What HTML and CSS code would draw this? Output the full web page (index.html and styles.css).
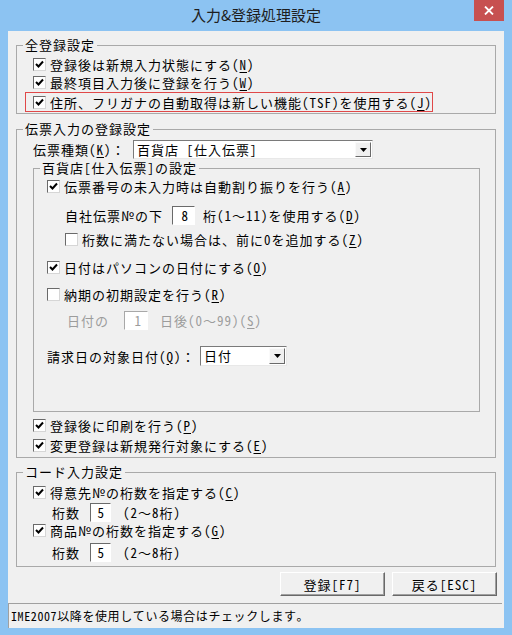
FILE: index.html
```html
<!DOCTYPE html>
<html lang="ja">
<head>
  <meta charset="UTF-8" />
  <title>入力&amp;登録処理設定</title>
  <link rel="stylesheet" href="styles.css">
</head>
<body>

  <div class="window">
    <!-- Title bar -->
    <div class="titlebar">
      <span></span>
      <span class="title">入力&amp;登録処理設定</span>
      <span class="close-area">
        <span class="close">
          <svg width="10" height="9" viewBox="0 0 10 9"><path d="M1 0.5 L9 8.5 M9 0.5 L1 8.5" stroke="#fff" stroke-width="1.8" fill="none"/></svg>
        </span>
      </span>
    </div>

    <div class="client">

      <!-- 全登録設定 -->
      <fieldset class="group group-all">
        <legend>全登録設定</legend>
        <div class="all-body">
          <div class="row row-all">
            <span class="cb"><svg viewBox="0 0 11 11"><path d="M2 5 L4.5 7.5 L9 2.5" stroke="#000" stroke-width="2" fill="none"/></svg></span>
            登録後は新規入力状態にする(<u>N</u>)
          </div>
          <div class="row row-all">
            <span class="cb"><svg viewBox="0 0 11 11"><path d="M2 5 L4.5 7.5 L9 2.5" stroke="#000" stroke-width="2" fill="none"/></svg></span>
            最終項目入力後に登録を行う(<u>W</u>)
          </div>
          <div class="row highlight">
            <span class="cb"><svg viewBox="0 0 11 11"><path d="M2 5 L4.5 7.5 L9 2.5" stroke="#000" stroke-width="2" fill="none"/></svg></span>
            住所、フリガナの自動取得は新しい機能(TSF)を使用する(<u>J</u>)
          </div>
        </div>
      </fieldset>

      <!-- 伝票入力の登録設定 -->
      <fieldset class="group group-slip">
        <legend>伝票入力の登録設定</legend>
        <div class="slip-body">
          <div class="row row-kind">
            <span class="kind-label">伝票種類(<u>K</u>)：</span>
            <div class="combo combo-kind">
              <span class="combo-text">百貨店 [仕入伝票]</span>
              <span class="combo-btn"><svg width="7" height="4" viewBox="0 0 7 4"><path d="M0 0 H7 L3.5 4 Z" fill="#000"/></svg></span>
            </div>
          </div>

          <fieldset class="group group-store">
            <legend>百貨店[仕入伝票]の設定</legend>
            <div class="store-body">
              <div class="row r-auto">
                <span class="cb"><svg viewBox="0 0 11 11"><path d="M2 5 L4.5 7.5 L9 2.5" stroke="#000" stroke-width="2" fill="none"/></svg></span>
                伝票番号の未入力時は自動割り振りを行う(<u>A</u>)
              </div>
              <div class="row row-field r-digits">
                <span>自社伝票№の下</span>
                <span class="num num-digits">8</span>
                <span>桁(1～11)を使用する(<u>D</u>)</span>
              </div>
              <div class="row r-zero">
                <span class="cb"></span>
                桁数に満たない場合は、前に0を追加する(<u>Z</u>)
              </div>
              <div class="row r-pc">
                <span class="cb"><svg viewBox="0 0 11 11"><path d="M2 5 L4.5 7.5 L9 2.5" stroke="#000" stroke-width="2" fill="none"/></svg></span>
                日付はパソコンの日付にする(<u>O</u>)
              </div>
              <div class="row r-due">
                <span class="cb"></span>
                納期の初期設定を行う(<u>R</u>)
              </div>
              <div class="row row-field r-days disabled">
                <span>日付の</span>
                <span class="num num-days">1</span>
                <span>日後(0～99)(<u>S</u>)</span>
              </div>
              <div class="row row-field r-bill">
                <span class="bill-label">請求日の対象日付(<u>Q</u>)：</span>
                <div class="combo combo-bill">
                  <span class="combo-text">日付</span>
                  <span class="combo-btn"><svg width="7" height="4" viewBox="0 0 7 4"><path d="M0 0 H7 L3.5 4 Z" fill="#000"/></svg></span>
                </div>
              </div>
            </div>
          </fieldset>

          <div class="row r-print">
            <span class="cb"><svg viewBox="0 0 11 11"><path d="M2 5 L4.5 7.5 L9 2.5" stroke="#000" stroke-width="2" fill="none"/></svg></span>
            登録後に印刷を行う(<u>P</u>)
          </div>
          <div class="row r-change">
            <span class="cb"><svg viewBox="0 0 11 11"><path d="M2 5 L4.5 7.5 L9 2.5" stroke="#000" stroke-width="2" fill="none"/></svg></span>
            変更登録は新規発行対象にする(<u>E</u>)
          </div>
        </div>
      </fieldset>

      <!-- コード入力設定 -->
      <fieldset class="group group-code">
        <legend>コード入力設定</legend>
        <div class="code-body">
          <div class="row r-cust">
            <span class="cb"><svg viewBox="0 0 11 11"><path d="M2 5 L4.5 7.5 L9 2.5" stroke="#000" stroke-width="2" fill="none"/></svg></span>
            得意先№の桁数を指定する(<u>C</u>)
          </div>
          <div class="row row-field r-len">
            <span>桁数</span>
            <span class="num num-len">5</span>
            <span>(2～8桁)</span>
          </div>
          <div class="row r-item">
            <span class="cb"><svg viewBox="0 0 11 11"><path d="M2 5 L4.5 7.5 L9 2.5" stroke="#000" stroke-width="2" fill="none"/></svg></span>
            商品№の桁数を指定する(<u>G</u>)
          </div>
          <div class="row row-field r-len r-len2">
            <span>桁数</span>
            <span class="num num-len">5</span>
            <span>(2～8桁)</span>
          </div>
        </div>
      </fieldset>

      <div class="buttons">
        <button class="btn">登録[F7]</button>
        <button class="btn">戻る[ESC]</button>
      </div>

      <div class="status">IME2007以降を使用している場合はチェックします。</div>
    </div>
  </div>

</body>
</html>
```

FILE: styles.css
```css
body {
  margin: 0;
  background-color: #8cc3f2;
  color: #000;
  font-family: "Noto Sans Mono CJK JP", "Noto Sans CJK JP", monospace;
  font-size: 13px;
  letter-spacing: 1px;
}

u {
  text-decoration-thickness: 1px;
  text-underline-offset: 2px;
}

.window {
  width: 512px;
  height: 635px;
  display: flex;
  flex-direction: column;
}

/* title bar */
.titlebar {
  height: 31px;
  display: grid;
  grid-template-columns: 1fr auto 1fr;
}

.title {
  font-family: "Noto Sans CJK JP", sans-serif;
  font-size: 15px;
  letter-spacing: 0;
  line-height: 30px;
  color: #1e1e1e;
}

.close-area {
  display: flex;
  justify-content: flex-end;
  padding-right: 8px;
}

.close {
  width: 30px;
  height: 21px;
  background: #c75050;
  display: flex;
  align-items: center;
  justify-content: center;
}

/* client area */
.client {
  margin: 0 8px;
  height: 597px;
  background: #f0f0f0;
  display: flex;
  flex-direction: column;
}

.group {
  margin: 0 8px;
  padding: 0;
  border: 1px solid #a9a9a9;
  min-width: 0;
}

.group legend {
  margin-left: 6px;
  padding: 0 2px;
  line-height: 14px;
}

.row {
  display: flex;
  align-items: center;
  height: 16px;
  white-space: nowrap;
}

.cb {
  width: 11px;
  height: 11px;
  flex: none;
  border: 1px solid;
  border-color: #6a6a6a #d6d6d6 #d6d6d6 #6a6a6a;
  background: #fff;
  margin-right: 4px;
  display: flex;
}

.cb svg {
  width: 11px;
  height: 11px;
}

/* 全登録設定 */
.group-all {
  margin-top: 7px;
}

.all-body {
  padding: 3px 0 1px 8px;
}

.row-all {
  height: 18px;
  padding-left: 8px;
}

.highlight {
  width: 408px;
  height: 20px;
  box-sizing: border-box;
  margin-top: 1px;
  padding-left: 7px;
  border: 1px solid #e04848;
}

/* 伝票入力の登録設定 */
.group-slip {
  margin-top: 8px;
}

.slip-body {
  padding: 4px 15px 4px 16px;
}

.row-kind {
  height: 19px;
}

.kind-label {
  width: 100px;
}

.combo {
  display: flex;
  box-sizing: border-box;
  background: #fff;
  border: 1px solid;
  border-color: #7a7a7a #e8e8e8 #e8e8e8 #7a7a7a;
}

.combo-text {
  flex: 1;
  padding-left: 3px;
  line-height: 17px;
}

.combo-btn {
  width: 14px;
  margin: 1px;
  border: 1px solid;
  border-color: #fafafa #6a6a6a #6a6a6a #fafafa;
  background: #f0f0f0;
  display: flex;
  align-items: center;
  justify-content: center;
}

.combo-kind {
  width: 240px;
  height: 19px;
}

.group-store {
  margin: 2px 0 0;
}

.store-body {
  padding: 3px 0 45px 13px;
}

.row-field {
  height: 20px;
}

.num {
  height: 19px;
  box-sizing: border-box;
  background: #fff;
  border: 1px solid;
  border-color: #6a6a6a #fff #fff #6a6a6a;
  text-align: right;
  padding-right: 5px;
  line-height: 17px;
}

.num-digits {
  width: 23px;
  margin: 0 8px 0 9px;
}

.r-digits {
  margin-top: 11px;
  padding-left: 18px;
}

.r-zero {
  margin-top: 6px;
  padding-left: 18px;
}

.r-pc {
  margin-top: 12px;
}

.r-due {
  margin-top: 11px;
}

.r-days {
  margin-top: 8px;
  padding-left: 20px;
}

.disabled {
  color: #9c9c9c;
}

.disabled .num {
  border-color: #a8a8a8 #fff #fff #a8a8a8;
}

.num-days {
  width: 24px;
  margin: 0 12px 0 15px;
}

.r-bill {
  margin-top: 16px;
}

.bill-label {
  width: 153px;
}

.combo-bill {
  width: 87px;
  height: 20px;
}

.combo-bill .combo-text {
  line-height: 18px;
}

.r-print {
  margin-top: 5px;
}

.r-change {
  margin-top: 4px;
}

/* コード入力設定 */
.group-code {
  margin-top: 7px;
}

.code-body {
  padding: 5px 0 4px 16px;
}

.r-len {
  height: 19px;
  margin-top: 3px;
  padding-left: 19px;
}

.r-len2 {
  margin-top: 5px;
}

.num-len {
  width: 21px;
  margin: 0 12px 0 10px;
}

/* buttons */
.buttons {
  display: flex;
  justify-content: flex-end;
  gap: 7px;
  margin-top: 5px;
  padding-right: 7px;
}

.btn {
  width: 105px;
  height: 24px;
  padding: 0;
  font-family: inherit;
  font-size: 13px;
  letter-spacing: 1px;
  color: #000;
  background: #f0f0f0;
  border: 1px solid;
  border-color: #fff #696969 #696969 #fff;
  box-shadow: inset -1px -1px #a0a0a0;
}

/* status bar */
.status {
  margin-top: auto;
  height: 25px;
  box-sizing: border-box;
  margin-right: 2px;
  border-top: 1px solid #a0a0a0;
  border-left: 1px solid #a0a0a0;
  padding-left: 2px;
  font-size: 12px;
  letter-spacing: 0.6px;
  line-height: 24px;
}
```
